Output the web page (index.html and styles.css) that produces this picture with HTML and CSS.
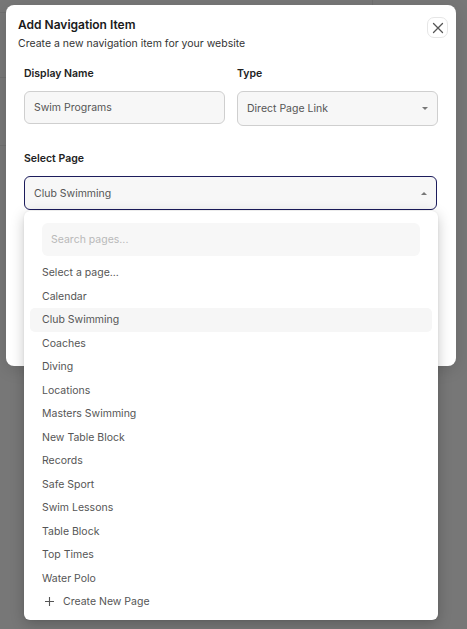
FILE: index.html
```html
<!DOCTYPE html>
<html>
<head>
<meta charset="utf-8">
<link rel="stylesheet" href="styles.css">
</head>
<body>
<div class="backdrop">
  <div class="modal">
    <div class="modal-head">
      <div class="titles">
        <h1 class="title">Add Navigation Item</h1>
        <p class="subtitle">Create a new navigation item for your website</p>
      </div>
      <button class="close" aria-label="Close">
        <svg width="12" height="12" viewBox="0 0 12 12"><path d="M1.5 1.5 L10.5 10.5 M10.5 1.5 L1.5 10.5" stroke="#555" stroke-width="1.3" stroke-linecap="round" fill="none"/></svg>
      </button>
    </div>
    <div class="form">
      <div class="row">
        <div class="field">
          <label class="label">Display Name</label>
          <div class="input">Swim Programs</div>
        </div>
        <div class="field">
          <label class="label">Type</label>
          <div class="select type-select"><span>Direct Page Link</span><span class="tri down"></span></div>
        </div>
      </div>
      <div class="field page-field">
        <label class="label">Select Page</label>
        <div class="select open"><span>Club Swimming</span><span class="tri up"></span></div>
        <div class="dropdown">
          <div class="search">Search pages...</div>
          <ul class="options">
            <li>Select a page...</li>
            <li>Calendar</li>
            <li class="active">Club Swimming</li>
            <li>Coaches</li>
            <li>Diving</li>
            <li>Locations</li>
            <li>Masters Swimming</li>
            <li>New Table Block</li>
            <li>Records</li>
            <li>Safe Sport</li>
            <li>Swim Lessons</li>
            <li>Table Block</li>
            <li>Top Times</li>
            <li>Water Polo</li>
            <li class="create"><svg width="11" height="11" viewBox="0 0 11 11"><path d="M5.5 1 V10 M1 5.5 H10" stroke="#555" stroke-width="1.1" fill="none"/></svg><span>Create New Page</span></li>
          </ul>
        </div>
      </div>
    </div>
  </div>
</div>
</body>
</html>
```
FILE: styles.css
```css
* { box-sizing: border-box; }
html, body { margin: 0; padding: 0; }
body {
  width: 467px;
  height: 629px;
  overflow: hidden;
  font-family: Inter, "Noto Sans", "Liberation Sans", sans-serif;
  background-color: #777777;
  background-image:
    linear-gradient(#6f6f6f, #6f6f6f),
    linear-gradient(#6f6f6f, #6f6f6f),
    linear-gradient(#6f6f6f, #6f6f6f),
    linear-gradient(#6f6f6f, #6f6f6f);
  background-size: 1px 6px, 8px 1px, 8px 1px, 8px 1px;
  background-position: 372px 0, 0 12px, 0 77px, 0 145px;
  background-repeat: no-repeat;
}
.backdrop {
  padding: 5px 11px 0 6px;
}
.modal {
  width: 450px;
  height: 361px;
  background: #fff;
  border-radius: 8px;
  padding: 11px 8px 0 12px;
  box-shadow: 0 4px 16px rgba(0,0,0,0.12);
}
.modal-head {
  display: flex;
  justify-content: space-between;
  align-items: flex-start;
}
.title {
  margin: 0;
  font-size: 12px;
  line-height: 18px;
  font-weight: 600;
  color: #1a1a1a;
}
.subtitle {
  margin: 2px 0 0;
  font-size: 10.5px;
  line-height: 16px;
  color: #333;
}
.close {
  width: 21px;
  height: 21px;
  margin-top: 1px;
  padding: 0;
  border: 1px solid #e6e6e6;
  border-radius: 7px;
  background: #fff;
  display: flex;
  align-items: center;
  justify-content: center;
}
.form {
  padding: 13px 11px 0 6px;
}
.row {
  display: grid;
  grid-template-columns: 201px 201px;
  column-gap: 12px;
}
.field { display: flex; flex-direction: column; }
.label {
  font-size: 10.5px;
  line-height: 16px;
  font-weight: 600;
  color: #222;
  margin-top: 1px;
  margin-bottom: 9px;
}
.input, .select {
  height: 33px;
  border: 1px solid #cfcfcf;
  border-radius: 6px;
  background: #f7f7f7;
  font-size: 10.5px;
  color: #555;
  display: flex;
  align-items: center;
  padding: 0 9px;
}
.type-select { height: 35px; }
.select { justify-content: space-between; padding-right: 9px; }
.select.open {
  height: 34px;
  border: 1.3px solid #1c1c5c;
}
.tri {
  width: 0; height: 0;
  border-left: 3.5px solid transparent;
  border-right: 3.5px solid transparent;
}
.tri.down { border-top: 3.5px solid #777; }
.tri.up { border-bottom: 3.5px solid #777; }
.page-field {
  margin-top: 24px;
  position: relative;
}
.dropdown {
  position: absolute;
  top: 61px;
  left: 0;
  width: 414px;
  height: 409px;
  background: #fff;
  border-radius: 6px;
  box-shadow: 0 4px 14px rgba(0,0,0,0.22), 0 0 2px rgba(0,0,0,0.08);
  padding: 12px 6px 0 6px;
  z-index: 2;
}
.search {
  margin: 0 12px;
  height: 33px;
  background: #f7f7f7;
  border-radius: 6px;
  font-size: 10.5px;
  color: #b9b9b9;
  display: flex;
  align-items: center;
  padding-left: 9px;
}
.options {
  list-style: none;
  margin: 5px 0 0;
  padding: 0;
}
.options li {
  height: 23.5px;
  display: flex;
  align-items: center;
  padding-left: 12px;
  font-size: 10.5px;
  color: #555;
  border-radius: 5px;
}
.options li.active { background: #f6f6f6; }
.options li.create { padding-left: 14px; gap: 8px; }
```
